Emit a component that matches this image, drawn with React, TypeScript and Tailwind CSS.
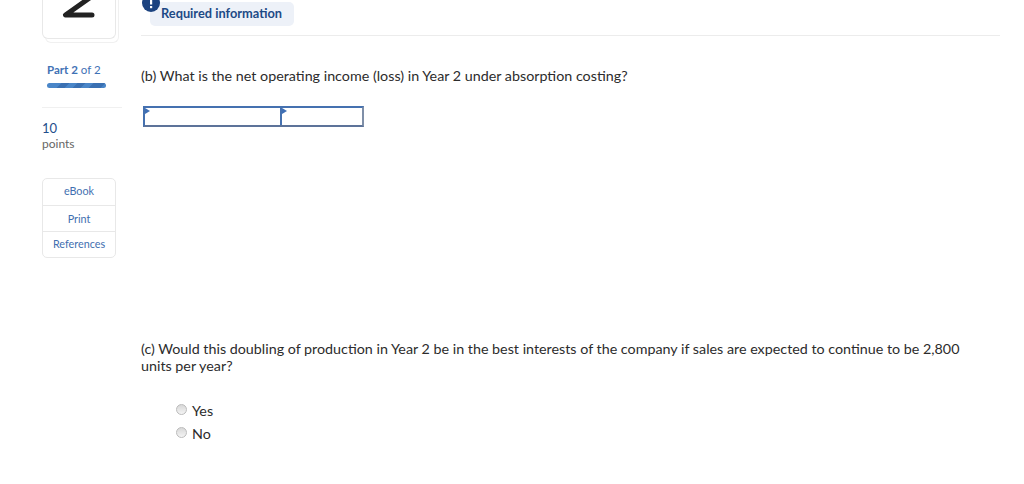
export default function App() {
  const font = { fontFamily: 'Lato, "Open Sans", sans-serif' };
  return (
    <div style={font} className="w-[1024px] h-[484px] overflow-hidden bg-white flex text-[#2c2c2c]">
      <aside className="w-[141px] shrink-0 pl-[42px] flex flex-col">
        <div className="relative w-[77px] h-[43px] shrink-0">
          <div className="absolute left-[3px] top-0 w-[74px] h-[43px] rounded-b-[6px] border border-t-0 border-[#f0f0f0] bg-white" />
          <div className="absolute left-0 top-0 w-[74px] h-[39px] rounded-b-[6px] border border-t-0 border-[#e8e8e8] bg-white flex items-start justify-start overflow-hidden">
            <svg width="34" height="19" viewBox="0 0 34 19" className="ml-[19px]" fill="none" stroke="#222" strokeWidth="5" strokeLinecap="round" strokeLinejoin="round">
              <path d="M36 -8 L3.5 15 H30" />
            </svg>
          </div>
        </div>
        <div className="pl-[5px] mt-[20px] text-[11.5px] leading-[14px] text-[#3f72b5]">
          <span className="font-bold">Part 2</span> of 2
        </div>
        <div className="ml-[5px] mt-[6px] w-[59px] h-[5px] rounded-full bg-[#4a86c8] flex overflow-hidden">
          <span className="w-[8px] ml-[12px] bg-[#3a70b2] -skew-x-[45deg]" />
          <span className="w-[8px] ml-[8px] bg-[#3a70b2] -skew-x-[45deg]" />
          <span className="w-[12px] ml-[8px] bg-[#3a70b2] -skew-x-[45deg]" />
        </div>
        <div className="mt-[19px] w-[80px] border-t border-[#f0f0f0]" />
        <div className="mt-[12px] text-[13px] leading-[16px] text-[#1f4e8c]">10</div>
        <div className="mt-[1px] text-[12px] leading-[14px] text-[#666]">points</div>
        <div className="mt-[27px] w-[74px] rounded-[5px] border border-[#e8e8e8] flex flex-col text-[10.8px] text-[#3f6fb0] text-center">
          <div className="h-[27px] pb-[2px] flex items-center justify-center border-b border-[#e8e8e8]">eBook</div>
          <div className="h-[26px] pt-[2px] flex items-center justify-center border-b border-[#e8e8e8]">Print</div>
          <div className="h-[25px] flex items-center justify-center">References</div>
        </div>
      </aside>
      <main className="w-[859px] shrink-0 flex flex-col">
        <div className="h-[36px] shrink-0 border-b border-[#ececec] pl-[9px] pt-[2px]">
          <div className="relative w-[144px] h-[24px] rounded-[5px] bg-[#edf1f8] pl-[11px] flex items-center text-[12.8px] font-bold text-[#1d4a86]">
            <svg width="18" height="12" viewBox="0 0 18 12" className="absolute left-[-8px] top-[-2px]">
              <circle cx="9" cy="3" r="9" fill="#1c4380" />
              <rect x="8" y="0" width="2.2" height="4.5" fill="#fff" />
              <rect x="8" y="6" width="2.2" height="2.2" fill="#fff" />
            </svg>
            Required information
          </div>
        </div>
        <p className="mt-[31px] text-[14.3px] leading-[18px] whitespace-nowrap">(b) What is the net operating income (loss) in Year 2 under absorption costing?</p>
        <div className="mt-[21px] ml-[2px] flex h-[21px] w-[221px] border-2 border-[#4571b0] border-r-[#7f8fa8] border-b-[#5d7399]">
          <div className="relative w-[137px] border-r-2 border-[#4571b0]">
            <span className="absolute left-0 top-0 border-y-[3.5px] border-y-transparent border-l-[5px] border-l-[#3f6fb5]" />
          </div>
          <div className="relative flex-1">
            <span className="absolute left-0 top-0 border-y-[3.5px] border-y-transparent border-l-[5px] border-l-[#3f6fb5]" />
          </div>
        </div>
        <p className="mt-[213px] w-[830px] text-[14.3px] leading-[17px]">(c) Would this doubling of production in Year 2 be in the best interests of the company if sales are expected to continue to be 2,800 units per year?</p>
        <div className="mt-[28px] ml-[35px] flex flex-col gap-[5px] text-[14.3px] leading-[18px]">
          <label className="flex items-center gap-[5px]">
            <span className="w-[11px] h-[11px] rounded-full border border-[#bbb] bg-gradient-to-b from-[#d8d8d8] to-[#f4f4f4] -mt-[3px]" />
            Yes
          </label>
          <label className="flex items-center gap-[5px]">
            <span className="w-[11px] h-[11px] rounded-full border border-[#bbb] bg-gradient-to-b from-[#d8d8d8] to-[#f4f4f4] -mt-[3px]" />
            No
          </label>
        </div>
      </main>
    </div>
  );
}
